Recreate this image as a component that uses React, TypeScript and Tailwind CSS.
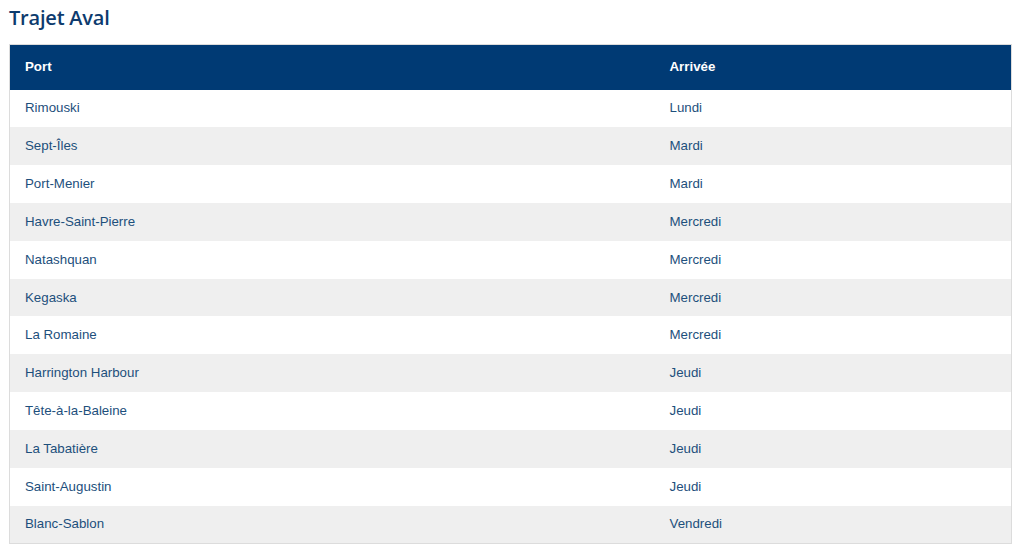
import React from "react";

const rows: [string, string][] = [
	["Rimouski", "Lundi"],
	["Sept-Îles", "Mardi"],
	["Port-Menier", "Mardi"],
	["Havre-Saint-Pierre", "Mercredi"],
	["Natashquan", "Mercredi"],
	["Kegaska", "Mercredi"],
	["La Romaine", "Mercredi"],
	["Harrington Harbour", "Jeudi"],
	["Tête-à-la-Baleine", "Jeudi"],
	["La Tabatière", "Jeudi"],
	["Saint-Augustin", "Jeudi"],
	["Blanc-Sablon", "Vendredi"],
];

export default function App() {
	return (
		<div className="w-[1024px] h-[555px] bg-white px-[9px] pt-[5px]" style={{ fontFamily: '"Liberation Sans", Arial, sans-serif' }}>
			<h2 className="text-[20px] leading-[26px] font-semibold text-[#0d3b6e] mb-[13px] tracking-[-0.2px]" style={{ fontFamily: '"Open Sans", sans-serif' }}>
				Trajet Aval
			</h2>
			<table className="w-[1003px] border-collapse border border-[#dcdcdc] text-[13.3px]">
				<thead>
					<tr className="bg-[#003a74] h-[45px] text-white">
						<th className="text-left font-bold pl-[15px] w-[645px]">Port</th>
						<th className="text-left font-bold pl-[15px]">Arrivée</th>
					</tr>
				</thead>
				<tbody>
					{rows.map(([port, day], i) => (
						<tr key={port} className={`h-[37.83px] text-[#1d4f7c] ${i % 2 === 1 ? "bg-[#efefef]" : "bg-white"}`}>
							<td className="pl-[15px]">{port}</td>
							<td className="pl-[15px]">{day}</td>
						</tr>
					))}
				</tbody>
			</table>
		</div>
	);
}
